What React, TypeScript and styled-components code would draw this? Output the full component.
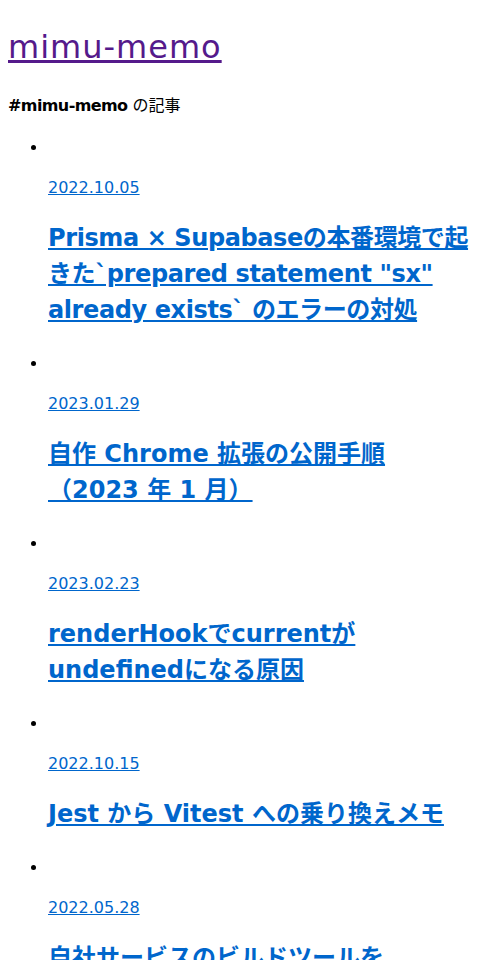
import React from "react";
import styled, { createGlobalStyle } from "styled-components";

interface IPost {
  date: string;
  title: string;
  tracking?: number;
}

const posts: IPost[] = [
  {
    date: "2022.10.05",
    title:
      'Prisma × Supabaseの本番環境で起きた`prepared statement "sx" already exists` のエラーの対処',
    tracking: -0.4,
  },
  { date: "2023.01.29", title: "自作 Chrome 拡張の公開手順（2023 年 1 月）" },
  { date: "2023.02.23", title: "renderHookでcurrentがundefinedになる原因" },
  { date: "2022.10.15", title: "Jest から Vitest への乗り換えメモ" },
  {
    date: "2022.05.28",
    title: "自社サービスのビルドツールを webpack から Vite に移行した話",
  },
];

function App() {
  return (
    <>
      <GlobalStyle />
      <Page>
        <SiteTitle href="#">mimu-memo</SiteTitle>
        <Lead>
          <b>#mimu-memo</b> の記事
        </Lead>
        <PostList>
          {posts.map((post) => (
            <PostItem key={post.date + post.title}>
              <DateLine>
                <a href="#">{post.date}</a>
              </DateLine>
              <PostTitle $tracking={post.tracking ?? 0}>
                <a href="#">{post.title}</a>
              </PostTitle>
            </PostItem>
          ))}
        </PostList>
      </Page>
    </>
  );
}

export default App;

const GlobalStyle = createGlobalStyle`
  body {
    margin: 8px;
    background: #fff;
    color: #000;
    font-family: "DejaVu Sans", "Noto Sans CJK JP", sans-serif;
    font-size: 16px;
    line-height: 24px;
  }
`;

const Page = styled.main`
  display: block;
`;

const SiteTitle = styled.a`
  display: block;
  width: fit-content;
  margin: 15px 0 23px;
  font-size: 32px;
  line-height: 48px;
  font-weight: normal;
  letter-spacing: 1px;
  color: #551a8b;
  text-decoration: underline;
`;

const Lead = styled.p`
  margin: 0 0 18px;
  b {
    letter-spacing: -0.6px;
  }
`;

const PostList = styled.ul`
  margin: 0;
  padding-left: 40px;
  list-style: disc;
`;

/* the marker sits on an empty first line, above the date */
const PostItem = styled.li`
  line-height: 24px;
  &::before {
    content: "\\200b";
    display: block;
  }
`;

const DateLine = styled.p`
  margin: 16px 0 0;
  a {
    color: #0066cc;
  }
`;

const PostTitle = styled.h2<{ $tracking: number }>`
  margin: 20px 0 24px;
  font-size: 24px;
  line-height: 36px;
  font-weight: bold;
  letter-spacing: ${(p) => p.$tracking}px;
  a {
    color: #0066cc;
  }
`;
